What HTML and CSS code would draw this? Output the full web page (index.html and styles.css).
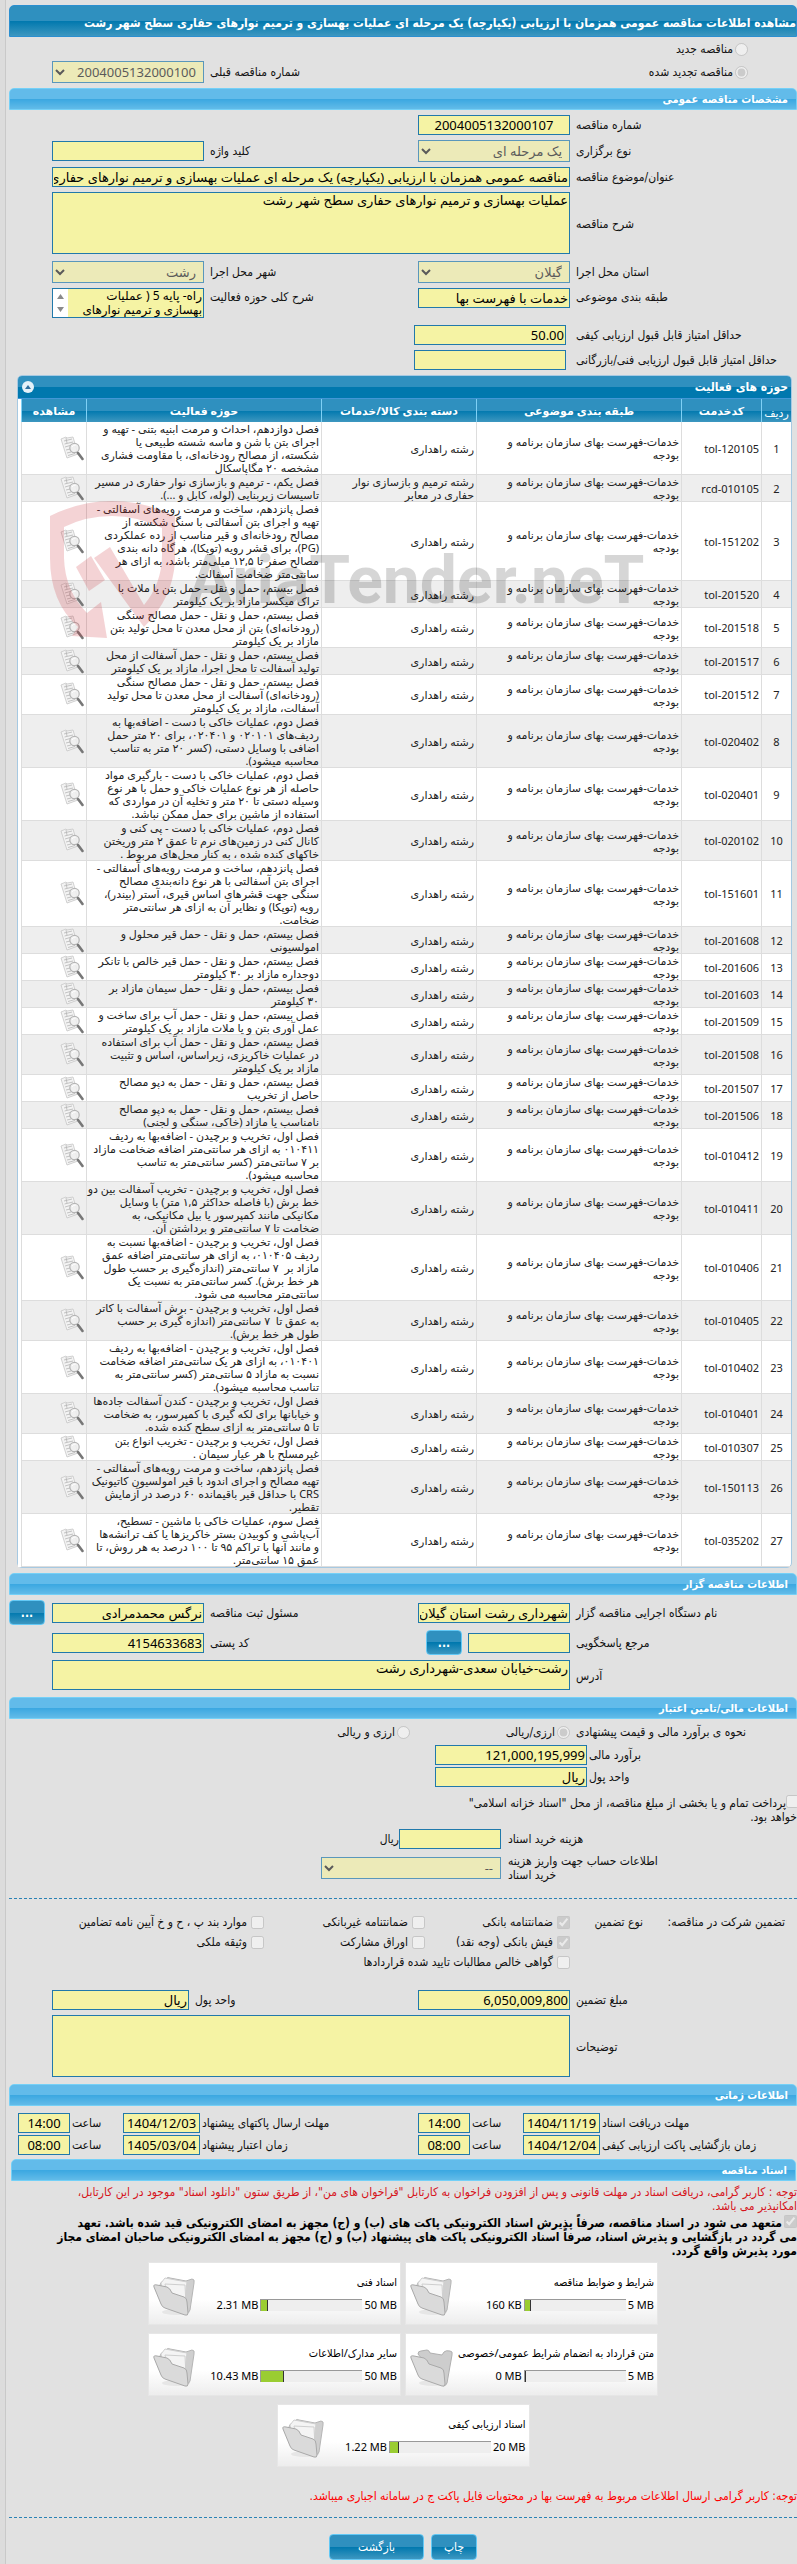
FILE: index.html
```html
<!DOCTYPE html>
<html lang="fa" dir="rtl">
<head>
<meta charset="utf-8">
<meta name="viewport" content="width=device-width, initial-scale=1">
<title>مشاهده اطلاعات مناقصه</title>
<link rel="stylesheet" href="styles.css">
</head>
<body>
<svg class="defs" aria-hidden="true">
  <symbol id="doc" viewBox="0 0 24 25">
    <path d="M1 3 6 1l1 1 6-1 5 17-11 4Z" fill="#f3f3f3" stroke="#c6c6c6" stroke-width=".8"/>
    <path d="M4 5l8-2M4.500 8l8.500-2M5 11l5-1.500M6 14l4-1M7 17l4-1M8 19.500l7-2M6 2l1 5" stroke="#b5b5b5" fill="none" stroke-width=".8"/>
    <circle cx="14.500" cy="12" r="4.700" fill="#eee" fill-opacity=".85" stroke="#b5b5b5" stroke-width="1.200"/>
    <path d="M12 11q1-2.500 4-2" stroke="#fff" fill="none"/>
    <path d="M18 17l4.500 6" stroke="#777" stroke-width="2.600" stroke-linecap="round"/>
  </symbol>
  <symbol id="folder" viewBox="0 0 44 40">
    <ellipse cx="24" cy="36" rx="14" ry="3" fill="#e6e6e6"/>
    <path d="M8 9q0-3 4-4l3-3q1-1 3 0l16 3 6-2q3 0 2 4l-4 27q-1 3-4 3Z" fill="#cfcfcf" stroke="#b5b5b5"/>
    <path class="sheet" d="M9 7l4-5 22 4-3 26-20-5Z"/>
    <path class="sheet" d="M13 8l20 1 1 20-18-4Z"/>
    <path d="M2 11q-1-3 3-2l10 2q3 1 5 6l12 4q3 1 3 5l1 11q0 3-3 2L13 32q-3-1-4-4Z" fill="#dadada" stroke="#a9a9a9"/>
  </symbol>
  <symbol id="folder-empty" viewBox="0 0 44 40">
    <ellipse cx="24" cy="36" rx="14" ry="3" fill="#e6e6e6"/>
    <path d="M9 7q0-3 3-3l6-1q2 0 3 3l12 2 2-3q2-2 6-1 3 0 2 4l-5 28q-1 3-4 3Z" fill="#cdcdcd" stroke="#b0b0b0"/>
    <path d="M2 11q-1-3 3-2l10 2q3 1 5 6l12 4q3 1 3 5l1 11q0 3-3 2L13 32q-3-1-4-4Z" fill="#dadada" stroke="#a9a9a9"/>
  </symbol>
</svg>
<main class="page">
<h1 class="title">مشاهده اطلاعات مناقصه عمومی همزمان با ارزیابی (یکپارچه) یک مرحله ای عملیات بهسازی و ترمیم نوارهای حفاری سطح شهر رشت</h1>

<div class="kind"><label><input type="radio" name="kind" disabled>مناقصه جدید</label></div>
<div class="kind row">
  <label><input type="radio" name="kind" checked disabled>مناقصه تجدید شده</label>
  <span></span>
  <label class="lbl" for="prev">شماره مناقصه قبلی</label>
  <select id="prev" class="num" disabled><option>2004005132000100</option></select>
</div>

<h2 class="section">مشخصات مناقصه عمومی</h2>
<div class="form">
  <div class="row"><label class="lbl" for="no">شماره مناقصه</label><input id="no" class="center" value="2004005132000107" readonly></div>
  <div class="row"><label class="lbl" for="type">نوع برگزاری</label><select id="type" disabled><option>یک مرحله ای</option></select>
    <label class="lbl" for="key">کلید واژه</label><input id="key" readonly></div>
  <div class="row"><label class="lbl" for="subj">عنوان/موضوع مناقصه</label><input id="subj" class="wide" readonly value="مناقصه عمومی همزمان با ارزیابی (یکپارچه) یک مرحله ای عملیات بهسازی و ترمیم نوارهای حفاری سطح شهر رشت"></div>
  <div class="row"><label class="lbl" for="desc">شرح مناقصه</label><textarea id="desc" class="wide tall" readonly>عملیات بهسازی و ترمیم نوارهای حفاری سطح شهر رشت</textarea></div>
  <div class="row"><label class="lbl" for="prov">استان محل اجرا</label><select id="prov" disabled><option>گیلان</option></select>
    <label class="lbl" for="city">شهر محل اجرا</label><select id="city" disabled><option>رشت</option></select></div>
  <div class="row top"><label class="lbl" for="cat">طبقه بندی موضوعی</label><input id="cat" value="خدمات با فهرست بها" readonly>
    <label class="lbl" for="area">شرح کلی حوزه فعالیت</label>
    <div class="scroll"><textarea id="area" readonly>راه- پایه 5 ( عملیات بهسازی و ترمیم نوارهای</textarea><svg viewBox="0 0 15 28"><path d="M4 10l3.500-5L11 10ZM4 18h7l-3.500 5Z" fill="#8a8a8a"/></svg></div></div>
  <div class="row score"><label class="lbl" for="q1">حداقل امتیاز قابل قبول ارزیابی کیفی</label><input id="q1" value="50.00" readonly></div>
  <div class="row score"><label class="lbl" for="q2">حداقل امتیاز قابل قبول ارزیابی فنی/بازرگانی</label><input id="q2" readonly></div>
</div>

<section class="panel">
  <div class="panel-head"><span>حوزه های فعالیت</span><button type="button" class="fold" aria-label="بستن"><svg viewBox="0 0 12 12"><circle cx="6" cy="6" r="6" fill="#e4f1f9"/><path d="M3 8l3-4 3 4Z" fill="#2e6e9e"/></svg></button></div>
  <table>
    <colgroup><col class="c-no"><col class="c-code"><col class="c-cat"><col class="c-group"><col><col class="c-view"></colgroup>
    <thead><tr><th class="low">ردیف</th><th>کدخدمت</th><th>طبقه بندی موضوعی</th><th>دسته بندی کالا/خدمات</th><th>حوزه فعالیت</th><th>مشاهده</th></tr></thead>
    <tbody>
<tr><td>1</td><td>tol-120105</td><td>خدمات-فهرست بهای سازمان برنامه و<br>بودجه</td><td>رشته راهداری</td><td>فصل دوازدهم، احداث و مرمت ابنیه بتنی - تهیه و<br>اجرای بتن با شن و ماسه شسته طبیعی یا<br>شکسته، از مصالح رودخانه‌ای، با مقاومت فشاری<br>مشخصه ۲۰ مگاپاسکال</td><td><svg><use href="#doc"/></svg></td></tr>
<tr><td>2</td><td>rcd-010105</td><td>خدمات-فهرست بهای سازمان برنامه و<br>بودجه</td><td>رشته ترمیم و بازسازی نوار<br>حفاری در معابر</td><td>فصل یکم، - ترمیم و بازسازی نوار حفاری در مسیر<br>تاسیسات زیربنایی (لوله، کابل و ...).</td><td><svg><use href="#doc"/></svg></td></tr>
<tr><td>3</td><td>tol-151202</td><td>خدمات-فهرست بهای سازمان برنامه و<br>بودجه</td><td>رشته راهداری</td><td>فصل پانزدهم، ساخت و مرمت رویه‌های آسفالتی -<br>تهیه و اجرای بتن آسفالتی با سنگ شکسته از<br>مصالح رودخانه‌ای و قیر مناسب از رده عملکردی<br>(PG)، برای قشر رویه (توپکا)، هرگاه دانه بندی<br>مصالح صفر تا ۱۲,۵ میلی‌متر باشد، به ازای هر<br>سانتی‌متر ضخامت آسفالت.</td><td><svg><use href="#doc"/></svg></td></tr>
<tr><td>4</td><td>tol-201520</td><td>خدمات-فهرست بهای سازمان برنامه و<br>بودجه</td><td>رشته راهداری</td><td>فصل بیستم، حمل و نقل - حمل بتن یا ملات با<br>تراک میکسر مازاد بر یک کیلومتر</td><td><svg><use href="#doc"/></svg></td></tr>
<tr><td>5</td><td>tol-201518</td><td>خدمات-فهرست بهای سازمان برنامه و<br>بودجه</td><td>رشته راهداری</td><td>فصل بیستم، حمل و نقل - حمل مصالح سنگی<br>(رودخانه‌ای) بتن از محل معدن تا محل تولید بتن<br>مازاد بر یک کیلومتر</td><td><svg><use href="#doc"/></svg></td></tr>
<tr><td>6</td><td>tol-201517</td><td>خدمات-فهرست بهای سازمان برنامه و<br>بودجه</td><td>رشته راهداری</td><td>فصل بیستم، حمل و نقل - حمل آسفالت از محل<br>تولید آسفالت تا محل اجرا، مازاد بر یک کیلومتر</td><td><svg><use href="#doc"/></svg></td></tr>
<tr><td>7</td><td>tol-201512</td><td>خدمات-فهرست بهای سازمان برنامه و<br>بودجه</td><td>رشته راهداری</td><td>فصل بیستم، حمل و نقل - حمل مصالح سنگی<br>(رودخانه‌ای) آسفالت از محل معدن تا محل تولید<br>آسفالت، مازاد بر یک کیلومتر</td><td><svg><use href="#doc"/></svg></td></tr>
<tr><td>8</td><td>tol-020402</td><td>خدمات-فهرست بهای سازمان برنامه و<br>بودجه</td><td>رشته راهداری</td><td>فصل دوم، عملیات خاکی با دست - اضافه‌بها به<br>ردیف‌های ۰۲۰۱۰۱ و ۰۲۰۴۰۱، برای ۲۰ متر حمل<br>اضافی با وسایل دستی، (کسر ۲۰ متر به تناسب<br>محاسبه میشود).</td><td><svg><use href="#doc"/></svg></td></tr>
<tr><td>9</td><td>tol-020401</td><td>خدمات-فهرست بهای سازمان برنامه و<br>بودجه</td><td>رشته راهداری</td><td>فصل دوم، عملیات خاکی با دست - بارگیری مواد<br>حاصله از هر نوع عملیات خاکی و حمل با هر نوع<br>وسیله دستی تا ۲۰ متر و تخلیه آن در مواردی که<br>استفاده از ماشین برای حمل ممکن نباشد.</td><td><svg><use href="#doc"/></svg></td></tr>
<tr><td>10</td><td>tol-020102</td><td>خدمات-فهرست بهای سازمان برنامه و<br>بودجه</td><td>رشته راهداری</td><td>فصل دوم، عملیات خاکی با دست - پی کنی و<br>کانال کنی در زمین‌های نرم تا عمق ۲ متر وریختن<br>خاکهای کنده شده ، به کنار محل‌های مربوط .</td><td><svg><use href="#doc"/></svg></td></tr>
<tr><td>11</td><td>tol-151601</td><td>خدمات-فهرست بهای سازمان برنامه و<br>بودجه</td><td>رشته راهداری</td><td>فصل پانزدهم، ساخت و مرمت رویه‌های آسفالتی -<br>اجرای بتن آسفالتی با هر نوع دانه‌بندی مصالح<br>سنگی جهت قشرهای اساس قیری، آستر (بیندر)،<br>رویه (توپکا) و نظایر آن به ازای هر سانتی‌متر<br>ضخامت.</td><td><svg><use href="#doc"/></svg></td></tr>
<tr><td>12</td><td>tol-201608</td><td>خدمات-فهرست بهای سازمان برنامه و<br>بودجه</td><td>رشته راهداری</td><td>فصل بیستم، حمل و نقل - حمل قیر محلول و<br>امولسیونی</td><td><svg><use href="#doc"/></svg></td></tr>
<tr><td>13</td><td>tol-201606</td><td>خدمات-فهرست بهای سازمان برنامه و<br>بودجه</td><td>رشته راهداری</td><td>فصل بیستم، حمل و نقل - حمل قیر خالص با تانکر<br>دوجداره مازاد بر ۳۰ کیلومتر</td><td><svg><use href="#doc"/></svg></td></tr>
<tr><td>14</td><td>tol-201603</td><td>خدمات-فهرست بهای سازمان برنامه و<br>بودجه</td><td>رشته راهداری</td><td>فصل بیستم، حمل و نقل - حمل سیمان مازاد بر<br>۳۰ کیلومتر</td><td><svg><use href="#doc"/></svg></td></tr>
<tr><td>15</td><td>tol-201509</td><td>خدمات-فهرست بهای سازمان برنامه و<br>بودجه</td><td>رشته راهداری</td><td>فصل بیستم، حمل و نقل - حمل آب برای ساخت و<br>عمل آوری بتن و یا ملات مازاد بر یک کیلومتر</td><td><svg><use href="#doc"/></svg></td></tr>
<tr><td>16</td><td>tol-201508</td><td>خدمات-فهرست بهای سازمان برنامه و<br>بودجه</td><td>رشته راهداری</td><td>فصل بیستم، حمل و نقل - حمل آب برای استفاده<br>در عملیات خاکریزی، زیراساس، اساس و تثبیت<br>مازاد بر یک کیلومتر</td><td><svg><use href="#doc"/></svg></td></tr>
<tr><td>17</td><td>tol-201507</td><td>خدمات-فهرست بهای سازمان برنامه و<br>بودجه</td><td>رشته راهداری</td><td>فصل بیستم، حمل و نقل - حمل به دپو مصالح<br>حاصل از تخریب</td><td><svg><use href="#doc"/></svg></td></tr>
<tr><td>18</td><td>tol-201506</td><td>خدمات-فهرست بهای سازمان برنامه و<br>بودجه</td><td>رشته راهداری</td><td>فصل بیستم، حمل و نقل - حمل به دپو مصالح<br>نامناسب یا مازاد (خاکی، سنگی و لجنی)</td><td><svg><use href="#doc"/></svg></td></tr>
<tr><td>19</td><td>tol-010412</td><td>خدمات-فهرست بهای سازمان برنامه و<br>بودجه</td><td>رشته راهداری</td><td>فصل اول، تخریب و برچیدن - اضافه‌بها به ردیف<br>۰۱۰۴۱۱ به ازای هر سانتی‌متر اضافه ضخامت مازاد<br>بر ۷ سانتی‌متر (کسر سانتی‌متر به تناسب<br>محاسبه میشود).</td><td><svg><use href="#doc"/></svg></td></tr>
<tr><td>20</td><td>tol-010411</td><td>خدمات-فهرست بهای سازمان برنامه و<br>بودجه</td><td>رشته راهداری</td><td>فصل اول، تخریب و برچیدن - تخریب آسفالت بین دو<br>خط برش (با فاصله حداکثر ۱,۵ متر) با وسایل<br>مکانیکی مانند کمپرسور یا بیل مکانیکی، به<br>ضخامت تا ۷ سانتی‌متر و برداشتن آن.</td><td><svg><use href="#doc"/></svg></td></tr>
<tr><td>21</td><td>tol-010406</td><td>خدمات-فهرست بهای سازمان برنامه و<br>بودجه</td><td>رشته راهداری</td><td>فصل اول، تخریب و برچیدن - اضافه‌بها نسبت به<br>ردیف ۰۱۰۴۰۵، به ازای هر سانتی‌متر اضافه عمق<br>مازاد بر &nbsp;۷ سانتی‌متر (اندازه‌گیری بر حسب طول<br>هر خط برش). کسر سانتی‌متر به نسبت یک<br>سانتی‌متر محاسبه می شود.</td><td><svg><use href="#doc"/></svg></td></tr>
<tr><td>22</td><td>tol-010405</td><td>خدمات-فهرست بهای سازمان برنامه و<br>بودجه</td><td>رشته راهداری</td><td>فصل اول، تخریب و برچیدن - برش آسفالت با کاتر<br>به عمق تا &nbsp;۷ سانتی‌متر (اندازه گیری بر حسب<br>طول هر خط برش).</td><td><svg><use href="#doc"/></svg></td></tr>
<tr><td>23</td><td>tol-010402</td><td>خدمات-فهرست بهای سازمان برنامه و<br>بودجه</td><td>رشته راهداری</td><td>فصل اول، تخریب و برچیدن - اضافه‌بها به ردیف<br>۰۱۰۴۰۱، به ازای هر یک سانتی‌متر اضافه ضخامت<br>نسبت به مازاد ۵ سانتی‌متر (کسر سانتی‌متر به<br>تناسب محاسبه میشود).</td><td><svg><use href="#doc"/></svg></td></tr>
<tr><td>24</td><td>tol-010401</td><td>خدمات-فهرست بهای سازمان برنامه و<br>بودجه</td><td>رشته راهداری</td><td>فصل اول، تخریب و برچیدن - کندن آسفالت جاده‌ها<br>و خیابانها برای لکه گیری با کمپرسور، به ضخامت<br>تا ۵ سانتی‌متر به ازای سطح کنده شده.</td><td><svg><use href="#doc"/></svg></td></tr>
<tr><td>25</td><td>tol-010307</td><td>خدمات-فهرست بهای سازمان برنامه و<br>بودجه</td><td>رشته راهداری</td><td>فصل اول، تخریب و برچیدن - تخریب انواع بتن<br>غیرمسلح با هر عیار سیمان .</td><td><svg><use href="#doc"/></svg></td></tr>
<tr><td>26</td><td>tol-150113</td><td>خدمات-فهرست بهای سازمان برنامه و<br>بودجه</td><td>رشته راهداری</td><td>فصل پانزدهم، ساخت و مرمت رویه‌های آسفالتی -<br>تهیه مصالح و اجرای اندود با قیر امولسیون کاتیونیک<br>CRS با حداقل قیر باقیمانده ۶۰ درصد در آزمایش<br>تقطیر.</td><td><svg><use href="#doc"/></svg></td></tr>
<tr><td>27</td><td>tol-035202</td><td>خدمات-فهرست بهای سازمان برنامه و<br>بودجه</td><td>رشته راهداری</td><td>فصل سوم، عملیات خاکی با ماشین - تسطیح،<br>آب‌پاشی و کوبیدن بستر خاکریزها یا کف ترانشه‌ها<br>و مانند آنها با تراکم ۹۵ تا ۱۰۰ درصد به هر روش، تا<br>عمق ۱۵ سانتی‌متر.</td><td><svg><use href="#doc"/></svg></td></tr>
    </tbody>
  </table>
  <svg class="mark" viewBox="0 0 604 140" direction="ltr" aria-hidden="true">
    <g fill="#c8232b" fill-opacity=".2">
      <path d="M0 15Q30 0 62 0q32 0 63 15v45q-2 37-31 66L44 57l16-11 34 58q18-22 18-50V27Q87 15 62 15 36 15 14 26v31q1 33 23 55l14-11 6 36-35-2 6-9Q0 101 0 57Z"/>
      <path d="M26 66l15-11 14 24-16 11Z"/>
    </g>
    <text x="138" y="102">AriaTender.neT</text>
  </svg>
</section>

<h2 class="section">اطلاعات مناقصه گزار</h2>
<div class="form">
  <div class="row"><label class="lbl" for="org">نام دستگاه اجرایی مناقصه گزار</label><input id="org" value="شهرداری رشت استان گیلان" readonly>
    <label class="lbl" for="who">مسئول ثبت مناقصه</label><input id="who" value="نرگس محمدمرادی" readonly><button type="button" class="btn dots">...</button></div>
  <div class="row"><label class="lbl" for="ref">مرجع پاسخگویی</label><div class="pair"><input id="ref" readonly><button type="button" class="btn dots">...</button></div>
    <label class="lbl" for="zip">کد پستی</label><input id="zip" value="4154633683" readonly></div>
  <div class="row"><label class="lbl" for="addr">آدرس</label><textarea id="addr" class="wide short" readonly>رشت-خیابان سعدی-شهرداری رشت</textarea></div>
</div>

<h2 class="section">اطلاعات مالی/تامین اعتبار</h2>
<div class="radios"><span class="lbl">نحوه ی برآورد مالی و قیمت پیشنهادی</span>
  <label><input type="radio" name="cur" checked disabled>ارزی/ریالی</label>
  <label><input type="radio" name="cur" disabled>ارزی و ریالی</label></div>
<div class="form money">
  <div class="row"><label class="lbl" for="est">برآورد مالی</label><input id="est" value="121,000,195,999" readonly></div>
  <div class="row"><label class="lbl" for="unit">واحد پول</label><input id="unit" value="ریال" readonly></div>
</div>
<label class="treasury"><input type="checkbox" disabled>پرداخت تمام و یا بخشی از مبلغ مناقصه، از محل "اسناد خزانه اسلامی"<br>خواهد بود.</label>
<div class="form cost">
  <div class="row"><label class="lbl" for="fee">هزینه خرید اسناد</label><span class="fee"><input id="fee" readonly>ریال</span></div>
  <div class="row"><label class="lbl" for="acc">اطلاعات حساب جهت واریز هزینه<br>خرید اسناد</label><select id="acc" class="num" disabled><option>--</option></select></div>
</div>
<hr>
<fieldset class="guar">
  <legend>تضمین شرکت در مناقصه:</legend>
  <span>نوع تضمین</span>
  <div class="opts">
    <label><input type="checkbox" checked disabled>ضمانتنامه بانکی</label>
    <label><input type="checkbox" disabled>ضمانتنامه غیربانکی</label>
    <label><input type="checkbox" disabled>موارد بند پ ، ح و خ آیین نامه تضامین</label>
    <label><input type="checkbox" checked disabled>فیش بانکی (وجه نقد)</label>
    <label><input type="checkbox" disabled>اوراق مشارکت</label>
    <label><input type="checkbox" disabled>وثیقه ملکی</label>
    <label class="all"><input type="checkbox" disabled>گواهی خالص مطالبات تایید شده قراردادها</label>
  </div>
</fieldset>
<div class="form">
  <div class="row amount"><label class="lbl" for="amt">مبلغ تضمین</label><input id="amt" value="6,050,009,800" readonly>
    <label class="lbl" for="unit2">واحد پول</label><input id="unit2" value="ریال" readonly></div>
  <div class="row"><label class="lbl" for="note">توضیحات</label><textarea id="note" class="wide tall" readonly></textarea></div>
</div>

<h2 class="section">اطلاعات زمانی</h2>
<div class="times">
  <label for="d1">مهلت دریافت اسناد</label><input id="d1" value="1404/11/19" readonly><label for="h1">ساعت</label><input id="h1" value="14:00" readonly>
  <label for="d2">مهلت ارسال پاکتهای پیشنهاد</label><input id="d2" value="1404/12/03" readonly><label for="h2">ساعت</label><input id="h2" value="14:00" readonly>
  <label for="d3">زمان بازگشایی پاکت ارزیابی کیفی</label><input id="d3" value="1404/12/04" readonly><label for="h3">ساعت</label><input id="h3" value="08:00" readonly>
  <label for="d4">زمان اعتبار پیشنهاد</label><input id="d4" value="1405/03/04" readonly><label for="h4">ساعت</label><input id="h4" value="08:00" readonly>
</div>

<h2 class="section docs">اسناد مناقصه</h2>
<p class="note">توجه : کاربر گرامی، دریافت اسناد در مهلت قانونی و پس از افزودن فراخوان به کارتابل "فراخوان های من"، از طریق ستون "دانلود اسناد" موجود در این کارتابل،<br>امکانپذیر می باشد.</p>
<label class="pledge"><input type="checkbox" checked disabled>متعهد می شود در اسناد مناقصه، صرفاً پذیرش اسناد الکترونیکی پاکت های (ب) و (ج) مجهز به امضای الکترونیکی قید شده باشد. تعهد<br>می گردد در بازگشایی و پذیرش اسناد، صرفاً اسناد الکترونیکی پاکت های پیشنهاد (ب) و (ج) مجهز به امضای الکترونیکی صاحبان امضای مجاز<br>مورد پذیرش واقع گردد.</label>

<div class="cards">
  <article class="card"><div class="info"><h3>شرایط و ضوابط مناقصه</h3><div class="usage"><bdi>5 MB</bdi><div class="bar"><i style="width:5px"></i></div><bdi>160 KB</bdi></div></div><svg><use href="#folder"/></svg></article>
  <article class="card"><div class="info"><h3>اسناد فنی</h3><div class="usage"><bdi>50 MB</bdi><div class="bar"><i style="width:6px"></i></div><bdi>2.31 MB</bdi></div></div><svg><use href="#folder"/></svg></article>
  <article class="card"><div class="info"><h3>متن قرارداد به انضمام شرایط عمومی/خصوصی</h3><div class="usage"><bdi>5 MB</bdi><div class="bar"><i style="width:0"></i></div><bdi>0 MB</bdi></div></div><svg><use href="#folder-empty"/></svg></article>
  <article class="card"><div class="info"><h3>سایر مدارک/اطلاعات</h3><div class="usage"><bdi>50 MB</bdi><div class="bar"><i style="width:22px"></i></div><bdi>10.43 MB</bdi></div></div><svg><use href="#folder"/></svg></article>
  <article class="card"><div class="info"><h3>اسناد ارزیابی کیفی</h3><div class="usage"><bdi>20 MB</bdi><div class="bar"><i style="width:8px"></i></div><bdi>1.22 MB</bdi></div></div><svg><use href="#folder"/></svg></article>
</div>
<p class="warn">توجه: کاربر گرامی ارسال اطلاعات مربوط به فهرست بها در محتویات فایل پاکت ج در سامانه اجباری میباشد.</p>
<hr class="last">
<div class="actions"><button type="button" class="btn">چاپ</button><button type="button" class="btn back">بازگشت</button></div>
</main>
</body>
</html>
```
FILE: styles.css
```css
* { box-sizing: border-box; }
body {
  margin: 0;
  background: #dcdcdc;
  color: #111;
  font: 12px/14px "DejaVu Sans Condensed", "DejaVu Sans", sans-serif;
}
.defs { position: absolute; width: 0; height: 0; }
.sheet { fill: #f4f4f4; stroke: #cfcfcf; }
.page {
  margin-left: 5px;
  padding: 5px 0 5px 3px;
  border-left: 1px solid #c9c9c9;
  background: #e1e1e1;
}
h1, h2, h3, p { margin: 0; }

.title {
  height: 32px;
  border: 1px solid #2b8fd0;
  border-radius: 5px 5px 0 0;
  background: linear-gradient(#2f90bf 0 50%, #0078ae 50%, #3d97c0);
  color: #fff;
  font-size: 12px;
  line-height: 34px;
  white-space: nowrap;
}
.section {
  height: 22px;
  margin-top: 5px;
  padding-right: 8px;
  border: 1px solid #74d0f7;
  border-radius: 5px 5px 0 0;
  background: linear-gradient(#62bbea 0 50%, #3aa7e1 50%, #62bbe8);
  color: #fff;
  font-size: 11px;
  line-height: 21px;
}
.docs { margin: 4px 1px 0 2px; }

input, select, textarea, button { font: inherit; margin: 0; border-radius: 0; }
input:not([type]), textarea, select { font-family: "Noto Sans", "DejaVu Sans", sans-serif; }
input:not([type]), textarea {
  height: 20px;
  padding: 0 1px;
  border: 1px solid #2179ab;
  background: #f5f3a4;
  color: #000;
  font-size: 13px;
  line-height: 14px;
  min-width: 0;
}
select {
  height: 22px;
  padding: 0 3px;
  border: 1px solid #2179ab;
  background: #f2efa8;
  color: #222;
  font-size: 13px;
  line-height: 16px;
}
.center { text-align: center; }
textarea { resize: none; margin-bottom: 2px; overflow: hidden; }
.tall { height: 62px; }
.short { height: 30px; }
.scroll { display: flex; height: 30px; margin-bottom: 2px; border: 1px solid #2179ab; background: #fff; }
.scroll textarea { flex: 1; height: 28px; margin: 0; border: 0; font-size: 12px; }
.scroll svg { width: 15px; height: 28px; }
input[type="radio"], input[type="checkbox"] { width: 13px; height: 13px; margin: 0 0 0 2px; }

.form { display: grid; gap: 5px; margin-top: 5px; }
.row {
  display: grid;
  grid-template-columns: 227px 152px minmax(0, 1fr) 152px 43px;
  align-items: center;
}
.top { align-items: start; }
.top .lbl { line-height: 18px; }
.lbl { text-align: left; padding-left: 6px; white-space: nowrap; }
.wide { grid-column: 2 / 5; }
.score { grid-template-columns: 231px 152px; }
.score .lbl { padding-left: 10px; }
.kind { height: 24px; padding: 0 49px 0 0; }
.kind.row { height: 22px; padding: 0; }
.kind label:first-child { display: flex; align-items: center; height: 100%; }
.kind.row label:first-child { padding-right: 49px; }

.panel {
  position: relative;
  margin: 5px 5px 0 8px;
  border: 1px solid #a6c9e2;
  border-radius: 5px;
  background: #fff;
}
.panel-head {
  display: flex;
  justify-content: space-between;
  align-items: center;
  height: 23px;
  padding: 0 3px 0 4px;
  border-bottom: 1px solid #4297d7;
  border-radius: 4px 4px 0 0;
  background: linear-gradient(#2f90bf 0 50%, #0078ae 50%, #0078ae);
  color: #fff;
  font-size: 12px;
  font-weight: bold;
}
.fold { display: flex; padding: 0; border: 0; background: none; }
.fold svg { width: 12px; height: 12px; }
table {
  width: 100%;
  table-layout: fixed;
  border-collapse: separate;
  border-spacing: 0;
  border-left: 3px solid #fff;
  font: 11px/13px "Noto Sans", "DejaVu Sans", sans-serif;
}
.c-no { width: 30px; }
.c-code { width: 80px; }
.c-cat { width: 205px; }
.c-group { width: 155px; }
.c-view { width: 65px; }
th {
  height: 23px;
  padding: 0;
  border-left: 1px solid #7fd0f5;
  background: linear-gradient(#2f90bf 0 50%, #0078ae 50%, #3d97c0);
  color: #fff;
  line-height: 18px;
  white-space: nowrap;
}
th.low { font-weight: normal; vertical-align: bottom; }
td {
  height: 27px;
  padding: 0 2px;
  border-left: 1px solid #ddd;
  border-bottom: 1px solid #ddd;
  color: #222;
  white-space: nowrap;
  vertical-align: middle;
}
td:nth-child(1) { text-align: center; }
td svg { display: block; width: 24px; height: 25px; }
tr:nth-child(even) td { background: #eee; }
.mark {
  position: absolute;
  top: 125px;
  left: 32px;
  width: 604px;
  height: 140px;
  pointer-events: none;
}
.mark text { fill: #000; fill-opacity: .16; font: bold 66px Roboto, sans-serif; direction: ltr; }

.btn {
  height: 26px;
  padding: 0;
  border: 1px solid #62c8f5;
  border-radius: 4px;
  background: linear-gradient(#2f90bf 0 50%, #0078ae 50%, #3d97c0);
  color: #fff;
}
.dots { width: 36px; font-weight: bold; height: 25px; }
.row > .dots { justify-self: end; }
.pair { display: flex; align-items: center; justify-content: space-between; width: 144px; }
.pair input { width: 102px; }

.radios { display: grid; grid-template-columns: 227px 160px 1fr; align-items: center; height: 26px; }
.radios label { display: flex; align-items: center; }
.money { gap: 2px; margin-top: 0; }
.money .row { grid-template-columns: 210px 152px; }
.money .lbl { padding-left: 2px; }
.treasury { display: block; margin-top: 8px; }
.treasury input { vertical-align: -1px; margin-right: -2px; margin-left: 0; }
.cost .row { grid-template-columns: 296px 180px; }
.cost .lbl { padding-left: 7px; }
.fee { display: flex; align-items: center; }
.fee input { width: 102px; }
hr { margin: 16px 0 0; border: 0; border-top: 1px dashed #2a82b4; }
.guar {
  display: flex;
  margin: 13px 0 18px;
  padding: 0 12px 0 0;
  border: 0;
  line-height: 20px;
}
.guar legend { float: right; width: 142px; padding: 0; }
.guar > span { width: 73px; }
.opts { flex: 1; display: grid; grid-template-columns: 145px 161px 1fr; }
.opts label { display: flex; align-items: center; white-space: nowrap; gap: 2px; }
.opts .all { grid-column: 1 / 4; }
.amount { grid-template-columns: 227px 152px minmax(0, 1fr) 137px 43px; }

.times {
  display: grid;
  grid-template-columns: 197px 77px 53px 52px 1fr 77px 53px 52px;
  row-gap: 2px;
  margin-top: 7px;
  padding-left: 9px;
}
.times label { padding-left: 2px; text-align: left; line-height: 20px; white-space: nowrap; }
.times input:not([type]) { text-align: center; padding: 0; }

.note { margin-top: 4px; color: #d6141c; }
.pledge { display: block; margin-top: 2px; color: #000; font-size: 12px; font-weight: bold; }
.pledge input { vertical-align: -1px; }
.cards {
  display: flex;
  flex-wrap: wrap;
  justify-content: center;
  gap: 8px 4px;
  max-width: 520px;
  margin: 4px auto 0;
}
.card {
  display: flex;
  width: 253px;
  height: 63px;
  padding: 10px 3px 6px;
  border: 1px solid #e6e6e6;
  background: linear-gradient(#fff 60%, #ededed);
  color: #000;
  font-family: "Noto Sans", "DejaVu Sans Condensed", sans-serif;
}
.card svg { width: 44px; height: 40px; margin-top: 3px; }
.info { flex: 1; display: grid; gap: 8px; align-content: start; }
.card h3 { font-size: 11px; font-weight: normal; line-height: 17px; white-space: nowrap; }
.usage { display: flex; align-items: center; gap: 2px; font-size: 11px; line-height: 14px; }
.bar { direction: ltr; width: 102px; height: 12px; border-top: 1px solid #999; border-left: 1px solid #999; background: #eee; }
.bar i { display: block; box-sizing: content-box; height: 11px; border-right: 1px solid #333; background: #9acd32; }
.warn { margin-top: 22px; color: #f00; }
.last { margin-top: 14px; }
.actions { display: flex; justify-content: center; gap: 7px; margin-top: 16px; }
.actions .btn { width: 46px; }
.actions .back { width: 95px; }
```
